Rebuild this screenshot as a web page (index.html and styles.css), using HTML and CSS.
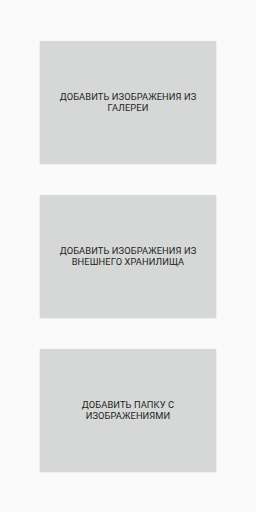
FILE: index.html
```html
<!DOCTYPE html>
<html>
<head>
<meta charset="utf-8">
<link rel="stylesheet" href="styles.css">
</head>
<body>
<div class="list">
  <button class="card">ДОБАВИТЬ ИЗОБРАЖЕНИЯ ИЗ ГАЛЕРЕИ</button>
  <button class="card">ДОБАВИТЬ ИЗОБРАЖЕНИЯ ИЗ ВНЕШНЕГО ХРАНИЛИЩА</button>
  <button class="card">ДОБАВИТЬ ПАПКУ С ИЗОБРАЖЕНИЯМИ</button>
</div>
</body>
</html>
```
FILE: styles.css
```css
html, body {
  margin: 0;
  padding: 0;
  background: #fafafa;
  width: 256px;
  height: 512px;
  overflow: hidden;
}
.list {
  display: flex;
  flex-direction: column;
  align-items: center;
  gap: 32px;
  padding-top: 41px;
}
.card {
  width: 176px;
  height: 122px;
  border: none;
  margin: 0;
  background: #d6d7d7;
  box-shadow: 0 1px 1.5px rgba(0,0,0,0.18);
  font-family: Roboto, "Noto Sans", sans-serif;
  font-size: 9.3px;
  font-weight: 400;
  line-height: 11px;
  color: #1e1e1e;
  text-align: center;
  padding: 0 18px;
  letter-spacing: 0.1px;
  display: flex;
  align-items: center;
  justify-content: center;
}
```
